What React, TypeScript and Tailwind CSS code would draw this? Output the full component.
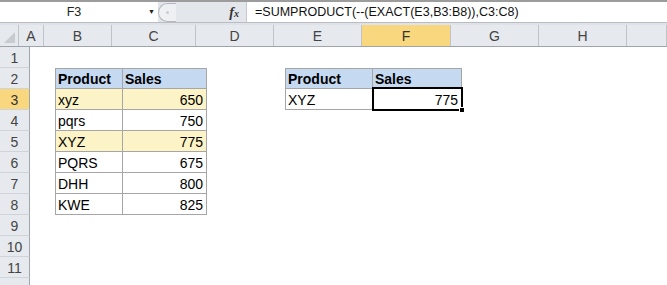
import React from 'react';

type Cell = {
  text?: string;
  bold?: boolean;
  right?: boolean;
  bg?: string;
  box?: string;
  selected?: boolean;
};

const cols = [
  { name: 'A', w: 'w-[25px]' },
  { name: 'B', w: 'w-[68px]' },
  { name: 'C', w: 'w-[84px]' },
  { name: 'D', w: 'w-[78px]' },
  { name: 'E', w: 'w-[88px]' },
  { name: 'F', w: 'w-[89px]' },
  { name: 'G', w: 'w-[88px]' },
  { name: 'H', w: 'w-[88px]' },
  { name: '', w: 'w-[40px]' },
];

const blue = 'bg-[#c5d9f1]';
const yellow = 'bg-[#fcf3c6]';

// borders of the two little tables
const tl = 'border-l border-t border-r border-b border-[#a6a6a6]';
const tm = 'border-r border-b border-t border-[#a6a6a6]';
const ml = 'border-l border-r border-b border-[#a6a6a6]';
const mm = 'border-r border-b border-[#a6a6a6]';

const data: Record<string, Cell> = {
  B2: { text: 'Product', bold: true, bg: blue, box: tl },
  C2: { text: 'Sales', bold: true, bg: blue, box: tm },
  B3: { text: 'xyz', bg: yellow, box: ml },
  C3: { text: '650', right: true, bg: yellow, box: mm },
  B4: { text: 'pqrs', box: ml },
  C4: { text: '750', right: true, box: mm },
  B5: { text: 'XYZ', bg: yellow, box: ml },
  C5: { text: '775', right: true, bg: yellow, box: mm },
  B6: { text: 'PQRS', box: ml },
  C6: { text: '675', right: true, box: mm },
  B7: { text: 'DHH', box: ml },
  C7: { text: '800', right: true, box: mm },
  B8: { text: 'KWE', box: ml },
  C8: { text: '825', right: true, box: mm },
  E2: { text: 'Product', bold: true, bg: blue, box: tl },
  F2: { text: 'Sales', bold: true, bg: blue, box: tm },
  E3: { text: 'XYZ', box: ml },
  F3: { text: '775', right: true, box: mm, selected: true },
};

const rows = [1, 2, 3, 4, 5, 6, 7, 8, 9, 10, 11, 12];

const FormulaBar = () => (
  <div className="flex h-[23px] border-t-2 border-b border-t-[#9c9c9c] border-b-[#b9bdc3] bg-white">
    <div className="flex w-[158px] items-center">
      <span className="flex-1 text-center text-[12.5px] text-[#222]">F3</span>
      <span className="mr-[3px] text-[7px] text-[#222]">▼</span>
    </div>
    <div className="flex w-[88px] items-center bg-[#e3e6ea]">
      <div className="flex h-[19px] w-[18px] items-center justify-center rounded-l-full border border-r-0 border-[#b5b9bf] bg-[#eef0f3]">
        <span className="h-[3px] w-[3px] rounded-full bg-[#c9cdd2]" />
      </div>
      <div className="flex-1" />
      <span className="mr-[7px] font-['Liberation_Serif',serif] text-[14px] font-bold italic text-[#333]">
        f<span className="text-[10px]">x</span>
      </span>
    </div>
    <div className="flex flex-1 items-center border-l border-[#c4c8cd] pl-[8px] text-[12.5px] text-[#111]">
      =SUMPRODUCT(--(EXACT(E3,B3:B8)),C3:C8)
    </div>
  </div>
);

const HeaderRow = () => (
  <div className="flex h-[22px] border-b border-[#9ea4ab] bg-[#e6e9ed]">
    <div className="relative w-[30px] border-r border-[#c0c4c9]">
      <div className="absolute bottom-[3px] right-[3px] h-0 w-0 border-l-[11px] border-t-[11px] border-l-transparent border-t-transparent border-b-0 border-r-[11px] border-r-[#c8ccd1] border-b-[#c8ccd1]" />
    </div>
    {cols.map((c) => (
      <div
        key={c.name || 'end'}
        className={`flex shrink-0 items-center justify-center border-r border-[#c0c4c9] pt-px text-[14px] ${c.w} ${
          c.name === 'F' ? 'bg-[#f9d77e] text-[#333]' : 'text-[#444]'
        }`}
      >
        {c.name}
      </div>
    ))}
  </div>
);

const GridRow = ({ r }: { r: number }) => (
  <div className="flex h-[21px]">
    <div
      className={`flex w-[30px] shrink-0 items-center justify-center border-r border-b border-r-[#9ea4ab] border-b-[#d0d4d9] pt-[2px] text-[14px] ${
        r === 3 ? 'bg-[#f9d77e] text-[#333]' : 'bg-[#e6e9ed] text-[#444]'
      }`}
    >
      {r < 12 ? r : ''}
    </div>
    {cols.map((c) => {
      const cell = data[`${c.name}${r}`];
      return (
        <div
          key={c.name || 'end'}
          className={`relative flex shrink-0 items-center px-[2px] pt-[2px] text-[14px] text-black ${c.w} ${
            cell?.bg ?? 'bg-white'
          } ${cell?.box ?? ''} ${cell?.right ? 'justify-end pr-[3px]' : ''} ${cell?.bold ? 'font-bold' : ''}`}
        >
          {cell?.text}
          {cell?.selected && (
            <>
              <div className="absolute -left-px -top-[2px] -right-[2px] -bottom-[2px] z-10 border-2 border-black" />
              <div className="absolute -bottom-[4px] -right-[4px] z-20 h-[6px] w-[6px] border border-white bg-black" />
            </>
          )}
        </div>
      );
    })}
  </div>
);

export default function App() {
  return (
    <div className="h-[285px] w-[667px] overflow-hidden bg-white font-['Liberation_Sans',Arial,sans-serif]">
      <FormulaBar />
      <div className="h-[2px] bg-[#dfe3e8]" />
      <HeaderRow />
      {rows.map((r) => (
        <GridRow key={r} r={r} />
      ))}
    </div>
  );
}
